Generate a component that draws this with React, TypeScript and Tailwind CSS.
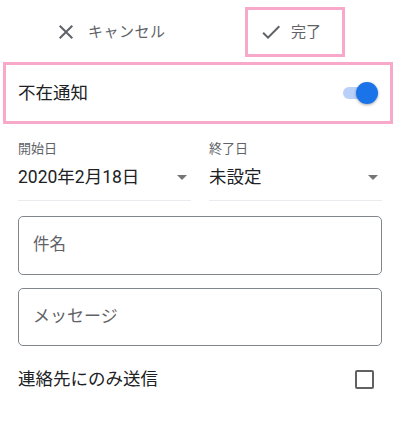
import { useState } from "react";

const font = { fontFamily: '"Roboto", "Noto Sans CJK JP", sans-serif' };

const CloseIcon = () => (
  <svg viewBox="0 0 24 24" className="w-[24px] h-[24px]" fill="#5f6368">
    <path d="M19 6.41L17.59 5 12 10.59 6.41 5 5 6.41 10.59 12 5 17.59 6.41 19 12 13.41 17.59 19 19 17.59 13.41 12z" />
  </svg>
);

const CheckIcon = () => (
  <svg viewBox="0 0 24 24" className="w-[24px] h-[24px]" fill="#5f6368">
    <path d="M9 16.17L4.83 12l-1.42 1.41L9 19 21 7l-1.41-1.41L9 16.17z" />
  </svg>
);

const Caret = () => (
  <svg viewBox="0 0 10 5" className="w-[10px] h-[5px]" fill="#757575">
    <path d="M0 0h10L5 5z" />
  </svg>
);

const DateField = ({ label, value }: { label: string; value: string }) => (
  <div className="flex flex-col w-[173px]">
    <span className="text-[13px] leading-[16px] text-[#5f6368]">{label}</span>
    <div className="flex items-center justify-between h-[34px] mt-[3px] pr-[4px]">
      <span className="text-[17.5px] text-[#202124]">{value}</span>
      <Caret />
    </div>
    <div className="h-px bg-[#e8eaed] mt-[6px]" />
  </div>
);

export default function App() {
  const [on, setOn] = useState(true);
  const [contactsOnly, setContactsOnly] = useState(false);

  return (
    <div className="w-[400px] h-[423px] bg-white overflow-hidden" style={font}>
      {/* Header */}
      <div className="flex items-start h-[62px] pt-[7px]">
        <div className="w-[245px] h-[50px] flex items-center pl-[54px]">
          <CloseIcon />
          <span className="ml-[10px] text-[15px] tracking-[0.5px] text-[#5f6368]">キャンセル</span>
        </div>
        <div className="w-[100px] h-[50px] border-[3px] border-[#f8a9c9] flex items-center pl-[11px]">
          <CheckIcon />
          <span className="ml-[8px] text-[15px] text-[#5f6368]">完了</span>
        </div>
      </div>

      {/* Vacation toggle */}
      <div className="mx-[3px] w-[390px] h-[62px] border-[3px] border-[#f8a9c9] flex items-center justify-between pl-[12px] pr-[12px]">
        <span className="text-[17.5px] text-[#202124]">不在通知</span>
        <button
          onClick={() => setOn(!on)}
          className="relative w-[36px] h-[22px] flex items-center"
        >
          <span className={`block w-[30px] h-[12px] rounded-full ml-[1px] ${on ? "bg-[#b9d1f8]" : "bg-[#bdc1c6]"}`} />
          <span
            className={`absolute top-0 w-[22px] h-[22px] rounded-full shadow-[0_1px_3px_rgba(0,0,0,0.35)] ${
              on ? "right-0 bg-[#1a73e8]" : "left-0 bg-white"
            }`}
          />
        </button>
      </div>

      {/* Dates */}
      <div className="flex justify-between px-[18px] pt-[17px]">
        <DateField label="開始日" value="2020年2月18日" />
        <DateField label="終了日" value="未設定" />
      </div>

      {/* Inputs */}
      <div className="flex flex-col gap-[13px] px-[18px] mt-[15px]">
        <div className="h-[59px] rounded-[5px] border border-[#80868b] flex items-center px-[14px]">
          <span className="text-[16.5px] text-[#5f6368]">件名</span>
        </div>
        <div className="h-[58px] rounded-[5px] border border-[#80868b] flex items-center px-[14px]">
          <span className="text-[17px] text-[#5f6368]">メッセージ</span>
        </div>
      </div>

      {/* Contacts only */}
      <div className="flex items-center justify-between pl-[18px] pr-[26px] mt-[19px] h-[28px]">
        <span className="text-[17.5px] text-[#202124]">連絡先にのみ送信</span>
        <button
          onClick={() => setContactsOnly(!contactsOnly)}
          className={`w-[19px] h-[19px] rounded-[2px] border-2 ${
            contactsOnly ? "bg-[#1a73e8] border-[#1a73e8]" : "border-[#616161]"
          }`}
        />
      </div>
    </div>
  );
}
